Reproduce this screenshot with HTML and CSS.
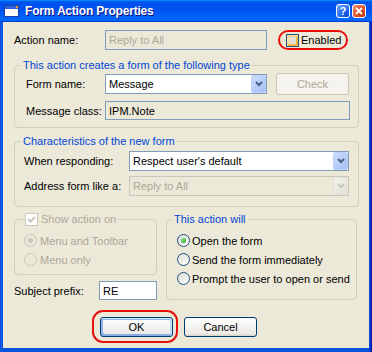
FILE: index.html
```html
<!DOCTYPE html>
<html lang="en">
  <head>
    <meta charset="utf-8" />
    <title>Form Action Properties</title>
    <link rel="stylesheet" href="styles.css">
  </head>
  <body>
    <div class="window">
      <div class="titlebar">
        <svg class="app-icon" viewBox="0 0 15 12" width="15" height="12">
          <rect x="0.5" y="0.5" width="14" height="11" fill="#fff" stroke="#1B3FA8" />
          <rect x="1" y="1" width="13" height="3" fill="#2D62E0" />
          <rect x="12" y="1" width="2" height="2" fill="#F0A040" />
        </svg>
        <span class="title">Form Action Properties</span>
        <div class="caption-btns">
          <span class="cap help">?</span>
          <span class="cap close">
            <svg viewBox="0 0 8 8" width="8" height="8">
              <path d="M1 1 L7 7 M7 1 L1 7" stroke="#fff" stroke-width="1.8" />
            </svg>
          </span>
        </div>
      </div>

      <div class="frame">
        <div class="row top-row">
          <span class="label lbl-action">Action name:</span>
          <span class="field readonly dim action-field">Reply to All</span>
          <span class="callout enabled-callout">
            <span class="check hover"></span>
            <span class="check-text">Enabled</span>
          </span>
        </div>

        <div class="group g-type">
          <span class="legend">This action creates a form of the following type</span>
          <div class="row form-row">
            <span class="label lbl-type">Form name:</span>
            <span class="combo combo-form">
              <span class="combo-text">Message</span>
              <span class="drop">
                <svg viewBox="0 0 8 6" width="8" height="6"><path d="M1 1 L4 4 L7 1" fill="none" stroke="#4D6185" stroke-width="2" /></svg>
              </span>
            </span>
            <span class="btn btn-disabled check-btn">Check</span>
          </div>
          <div class="row class-row">
            <span class="label lbl-type">Message class:</span>
            <span class="field readonly class-field">IPM.Note</span>
          </div>
        </div>

        <div class="group g-chars">
          <span class="legend">Characteristics of the new form</span>
          <div class="row resp-row">
            <span class="label lbl-chars">When responding:</span>
            <span class="combo combo-wide">
              <span class="combo-text">Respect user's default</span>
              <span class="drop">
                <svg viewBox="0 0 8 6" width="8" height="6"><path d="M1 1 L4 4 L7 1" fill="none" stroke="#4D6185" stroke-width="2" /></svg>
              </span>
            </span>
          </div>
          <div class="row addr-row">
            <span class="label lbl-chars">Address form like a:</span>
            <span class="combo combo-wide combo-disabled">
              <span class="combo-text">Reply to All</span>
              <span class="drop">
                <svg viewBox="0 0 8 6" width="8" height="6"><path d="M1 1 L4 4 L7 1" fill="none" stroke="#fff" stroke-width="2" /></svg>
              </span>
            </span>
          </div>
        </div>

        <div class="bottom">
          <div class="left-col">
            <div class="group g-show">
              <span class="legend legend-check dim">
                <span class="check check-disabled">
                  <svg viewBox="0 0 11 11" width="11" height="11"><path d="M2 5 L4.5 7.5 L9 3" fill="none" stroke="#CAC8BB" stroke-width="2" /></svg>
                </span>
                Show action on
              </span>
              <div class="radio-row dim"><span class="radio radio-disabled on"></span>Menu and Toolbar</div>
              <div class="radio-row dim"><span class="radio radio-disabled"></span>Menu only</div>
            </div>
            <div class="row prefix-row">
              <span class="label lbl-prefix">Subject prefix:</span>
              <span class="field prefix-field">RE</span>
            </div>
          </div>

          <div class="group g-will">
            <span class="legend">This action will</span>
            <div class="radio-row"><span class="radio on"></span>Open the form</div>
            <div class="radio-row"><span class="radio"></span>Send the form immediately</div>
            <div class="radio-row"><span class="radio"></span>Prompt the user to open or send</div>
          </div>
        </div>

        <div class="buttons">
          <span class="callout ok-callout">
            <span class="btn btn-default">OK</span>
          </span>
          <span class="btn cancel-btn">Cancel</span>
        </div>
      </div>
    </div>
  </body>
</html>
```

FILE: styles.css
```css
html,
body {
  margin: 0;
}

body {
  font-family: "Liberation Sans", Arial, sans-serif;
  font-size: 11px;
  color: #000;
}

.window {
  width: 372px;
  height: 352px;
  display: flex;
  flex-direction: column;
  background: linear-gradient(90deg, #0831D9, #166AEE 1px, #0855DD 2px, #0855DD 369px, #003BDA 370px, #00138C);
}

/* title bar */
.titlebar {
  height: 22px;
  display: flex;
  align-items: center;
  padding: 0 6px 0 4px;
  background: linear-gradient(180deg, #0997FF, #0053EE 8%, #0050EE 40%, #0066FF 88%, #0066FF 93%, #005BFF 95%, #003DD7 96%, #003DD7);
  color: #fff;
}

.app-icon {
  margin-right: 6px;
}

.title {
  flex: 1;
  font-weight: bold;
  font-size: 12px;
  letter-spacing: -0.2px;
  text-shadow: 1px 1px #0F1089;
}

.caption-btns {
  display: flex;
  gap: 2px;
}

.cap {
  width: 14px;
  height: 14px;
  box-sizing: border-box;
  border: 1px solid #fff;
  border-radius: 3px;
  display: flex;
  align-items: center;
  justify-content: center;
}

.cap.help {
  background: radial-gradient(circle at 85% 85%, #0047D8, #2E72F2 55%, #8EB5FA);
  font-weight: bold;
  font-size: 11px;
}

.cap.close {
  background: radial-gradient(circle at 85% 85%, #C13B14, #E1552B 55%, #F2A489);
}

/* dialog body */
.frame {
  flex: 1;
  margin: 0 3px 3px;
  padding: 8px 10px 0 11px;
  background: #ECE9D8;
  border-bottom: 1px solid #0855DD;
}

.row {
  display: flex;
  align-items: center;
}

.label {
  flex: none;
}

.dim {
  color: #ACA899;
}

.top-row {
  height: 20px;
}

.lbl-action {
  width: 91px;
}

.field {
  box-sizing: border-box;
  height: 19px;
  border: 1px solid #7F9DB9;
  background: #fff;
  padding: 0 3px;
  display: flex;
  align-items: center;
}

.field.readonly {
  background: #ECE9D8;
}

.action-field {
  width: 162px;
  height: 20px;
}

.callout {
  box-sizing: border-box;
  border: 2px solid #E8100C;
  border-radius: 11px;
  display: flex;
  align-items: center;
}

.enabled-callout {
  width: 70px;
  height: 20px;
  margin-left: 11px;
  padding-left: 6px;
}

.check {
  box-sizing: border-box;
  width: 13px;
  height: 13px;
  border: 1px solid #1C5180;
  background: linear-gradient(135deg, #DCDCD7, #fff);
  display: inline-flex;
  align-items: center;
  justify-content: center;
  flex: none;
}

.check.hover {
  box-shadow: inset 1px 1px #FEDF9C, inset -1px -1px #F9B53E, inset 2px 2px #FDD889, inset -2px -2px #F8B842;
  background: #E4E2D6;
}

.check-text {
  margin-left: 2px;
}

.check.check-disabled {
  border-color: #CAC8BB;
  background: #fff;
}

/* group boxes */
.group {
  border: 1px solid #D0D0BF;
  border-radius: 4px;
}

.legend {
  display: flex;
  align-items: center;
  width: fit-content;
  line-height: 13px;
  height: 13px;
  margin-top: -7px;
  padding: 0 2px;
  background: #ECE9D8;
  color: #0046D5;
}

.g-type {
  margin-top: 15px;
  padding: 0 0 7px 11px;
}

.g-type .legend {
  margin-left: -5px;
}

.lbl-type {
  width: 79px;
}

.form-row {
  height: 22px;
  margin-top: 1px;
}

.combo {
  box-sizing: border-box;
  height: 20px;
  border: 1px solid #7F9DB9;
  background: #fff;
  display: flex;
  align-items: center;
}

.combo-text {
  flex: 1;
  padding-left: 3px;
}

.drop {
  box-sizing: border-box;
  width: 15px;
  height: 18px;
  border: 1px solid #BBCFFA;
  border-radius: 2px;
  background: linear-gradient(135deg, #D0DEFC, #B4CAF7 60%, #A6BFF2);
  display: flex;
  align-items: center;
  justify-content: center;
}

.combo-form {
  width: 162px;
}

.combo-wide {
  width: 220px;
}

.combo-disabled {
  border-color: #C9C7BA;
  background: #ECE9D8;
  color: #ACA899;
}

.combo-disabled .drop {
  border-color: #E4E3DA;
  background: linear-gradient(135deg, #F2F1EA, #E2E1D9);
}

.combo-disabled .drop svg path {
  stroke: #C9C7BA;
}

.btn {
  box-sizing: border-box;
  width: 73px;
  height: 20px;
  border: 1px solid #003C74;
  border-radius: 3px;
  background: linear-gradient(180deg, #fff, #ECEBE6 86%, #D6D0C5);
  display: flex;
  align-items: center;
  justify-content: center;
  flex: none;
}

.btn-disabled {
  border-color: #C9C7BA;
  background: #F4F3EE;
  color: #ACA899;
}

.check-btn {
  height: 22px;
  margin-left: 9px;
}

.class-row {
  margin-top: 6px;
}

.class-field {
  width: 245px;
}

.g-chars {
  margin-top: 13px;
  padding: 0 0 10px 9px;
}

.g-chars .legend {
  margin-left: -3px;
}

.lbl-chars {
  width: 105px;
}

.resp-row {
  margin-top: 3px;
}

.addr-row {
  margin-top: 5px;
}

/* lower part */
.bottom {
  display: flex;
  margin-top: 12px;
}

.left-col {
  width: 143px;
}

.g-show {
  padding: 0 0 5px 9px;
}

.legend-check {
  color: #ACA899;
  padding: 0 2px 0 1px;
  gap: 3px;
}

.radio-row {
  display: flex;
  align-items: center;
  height: 19px;
  gap: 3px;
}

.legend + .radio-row {
  margin-top: 5px;
}

.radio {
  box-sizing: border-box;
  width: 13px;
  height: 13px;
  border: 1px solid #1C5180;
  border-radius: 50%;
  background: linear-gradient(135deg, #DCDCD7, #fff);
  display: flex;
  align-items: center;
  justify-content: center;
}

.radio.on::after {
  content: "";
  width: 5px;
  height: 5px;
  border-radius: 50%;
  background: radial-gradient(circle at 35% 35%, #7BE27A, #21A121);
}

.radio-disabled {
  border-color: #CAC8BB;
  background: #ECE9D8;
}

.radio-disabled.on::after {
  background: #CAC8BB;
}

.prefix-row {
  margin-top: 6px;
}

.lbl-prefix {
  width: 85px;
}

.prefix-field {
  width: 60px;
}

.g-will {
  width: 191px;
  box-sizing: border-box;
  margin-left: 9px;
  padding: 0 0 10px 10px;
}

.g-will .legend {
  margin-left: -5px;
}

.g-will .radio-row {
  gap: 2px;
}

/* dialog buttons */
.buttons {
  display: flex;
  align-items: center;
  margin-top: 10px;
  padding-left: 78px;
}

.ok-callout {
  height: 33px;
  padding: 5px 3px 4px 6px;
}

.btn-default {
  box-shadow: inset -1px 1px #CEE7FF, inset 1px 2px #98B8EA, inset -2px 2px #BCD4F6, inset 1px -1px #89ADE4, inset 2px -2px #89ADE4;
}

.cancel-btn {
  margin-left: 6px;
}
```
